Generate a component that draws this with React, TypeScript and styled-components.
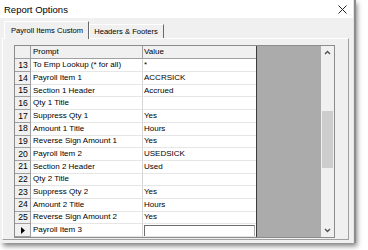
import React from 'react';
import styled, { createGlobalStyle } from 'styled-components';

type Row = { num?: string; prompt: string; value: string; current?: boolean };

const rows: Row[] = [
  { num: '13', prompt: 'To Emp Lookup (* for all)', value: '*' },
  { num: '14', prompt: 'Payroll Item 1', value: 'ACCRSICK' },
  { num: '15', prompt: 'Section 1 Header', value: 'Accrued' },
  { num: '16', prompt: 'Qty 1 Title', value: '' },
  { num: '17', prompt: 'Suppress Qty 1', value: 'Yes' },
  { num: '18', prompt: 'Amount 1 Title', value: 'Hours' },
  { num: '19', prompt: 'Reverse Sign Amount 1', value: 'Yes' },
  { num: '20', prompt: 'Payroll Item 2', value: 'USEDSICK' },
  { num: '21', prompt: 'Section 2 Header', value: 'Used' },
  { num: '22', prompt: 'Qty 2 Title', value: '' },
  { num: '23', prompt: 'Suppress Qty 2', value: 'Yes' },
  { num: '24', prompt: 'Amount 2 Title', value: 'Hours' },
  { num: '25', prompt: 'Reverse Sign Amount 2', value: 'Yes' },
  { prompt: 'Payroll Item 3', value: '', current: true },
];

export default function App() {
  return (
    <>
      <GlobalStyle />
      <Window>
        <TitleBar>
          <span>Report Options</span>
          <svg width="9" height="9" viewBox="0 0 9 9">
            <path d="M0.5 0.5 L8.5 8.5 M8.5 0.5 L0.5 8.5" stroke="#222" strokeWidth="1" />
          </svg>
        </TitleBar>

        <Body>
          <TabStrip>
            <Tab $active>Payroll Items Custom</Tab>
            <Tab>Headers &amp; Footers</Tab>
          </TabStrip>

          <Panel>
            <Grid>
              <Table>
                <GridRow $header>
                  <HeadCell />
                  <PromptCell $header>Prompt</PromptCell>
                  <ValueCell $header>Value</ValueCell>
                </GridRow>
                {rows.map((row, i) => (
                  <GridRow key={i}>
                    <HeadCell>
                      {row.current ? (
                        <svg width="4" height="7" viewBox="0 0 4 7">
                          <polygon points="0,0 4,3.5 0,7" fill="#000" />
                        </svg>
                      ) : (
                        row.num
                      )}
                    </HeadCell>
                    <PromptCell>{row.prompt}</PromptCell>
                    <ValueCell>{row.current ? <EditBox /> : row.value}</ValueCell>
                  </GridRow>
                ))}
              </Table>

              <Filler />

              <ScrollBar>
                <ArrowBox>
                  <svg width="7" height="5" viewBox="0 0 7 5">
                    <polyline points="1,4 3.5,1.5 6,4" fill="none" stroke="#505050" strokeWidth="1.4" />
                  </svg>
                </ArrowBox>
                <Track>
                  <Thumb />
                </Track>
                <ArrowBox>
                  <svg width="7" height="5" viewBox="0 0 7 5">
                    <polyline points="1,1 3.5,3.5 6,1" fill="none" stroke="#505050" strokeWidth="1.4" />
                  </svg>
                </ArrowBox>
              </ScrollBar>
            </Grid>
          </Panel>
        </Body>
      </Window>
    </>
  );
}

const GlobalStyle = createGlobalStyle`
  html, body {
    margin: 0;
    padding: 0;
    background: #fff;
  }

  body {
    width: 368px;
    height: 250px;
    overflow: hidden;
    font-family: 'Liberation Sans', Arial, sans-serif;
    color: #000;
  }
`;

const Window = styled.div`
  width: 353px;
  height: 243px;
  display: flex;
  flex-direction: column;
  background: #f0f0f0;
  border-right: 1px solid #e4e4e4;
  box-shadow: 2px 0 0 #8c8c8c, 3px 3px 5px rgba(0, 0, 0, 0.5);
`;

const TitleBar = styled.div`
  height: 20px;
  display: flex;
  align-items: center;
  justify-content: space-between;
  padding: 0 6px 0 4px;
  background: #fff;
  font-size: 9.5px;
`;

const Body = styled.div`
  flex: 1;
  display: flex;
  flex-direction: column;
  padding: 4px 4px 3px 2px;
`;

const TabStrip = styled.div`
  height: 16px;
  display: flex;
  align-items: flex-end;
  padding-left: 2px;
`;

const Tab = styled.div<{ $active?: boolean }>`
  position: relative;
  z-index: ${({ $active }) => ($active ? 1 : 0)};
  height: ${({ $active }) => ($active ? '17px' : '13px')};
  margin-bottom: ${({ $active }) => ($active ? '-1px' : '0')};
  display: flex;
  align-items: center;
  padding: 0 ${({ $active }) => ($active ? '5px' : '5px')} 0 ${({ $active }) => ($active ? '6px' : '4px')};
  background: #f0f0f0;
  border-top: 1px solid #fff;
  border-left: 1px solid #fff;
  border-right: 1px solid #696969;
  font-size: 7.6px;
  white-space: nowrap;
`;

const Panel = styled.div`
  flex: 1;
  display: flex;
  padding: 6px 13px 1px 11px;
  border: 1px solid;
  border-color: #fff #a0a0a0 #a0a0a0 #fff;
  min-height: 0;
`;

const Grid = styled.div`
  flex: 1;
  display: flex;
  border: 1px solid #8c8c8c;
  background: #ababab;
  overflow: hidden;
`;

const Table = styled.div`
  width: 241px;
  display: flex;
  flex-direction: column;
  background: #fff;
  border-right: 1px solid #3c3c3c;
  overflow: hidden;
`;

const GridRow = styled.div<{ $header?: boolean }>`
  flex: none;
  height: ${({ $header }) => ($header ? '13px' : '12.7px')};
  display: grid;
  grid-template-columns: 16px 112px 113px;
  font-size: 8px;
  line-height: 1;
`;

const HeadCell = styled.div`
  display: flex;
  align-items: center;
  justify-content: center;
  padding-left: 1px;
  background: #f0f0f0;
  border-right: 1px solid #a0a0a0;
  border-bottom: 1px solid #a0a0a0;
  font-size: 8.6px;
`;

const PromptCell = styled.div<{ $header?: boolean }>`
  display: flex;
  align-items: center;
  padding-left: 2px;
  background: ${({ $header }) => ($header ? '#f0f0f0' : '#fff')};
  border-right: 1px solid ${({ $header }) => ($header ? '#a0a0a0' : '#d4d4d4')};
  border-bottom: 1px solid ${({ $header }) => ($header ? '#a0a0a0' : '#e6e6e6')};
  white-space: nowrap;
  overflow: hidden;
`;

const ValueCell = styled(PromptCell)`
  border-right: none;
  padding-left: 1px;
`;

const EditBox = styled.div`
  align-self: stretch;
  flex: 1;
  margin: 1px 1px -2px 0;
  border: 1px solid #6e6e6e;
  border-right-color: #a8a8a8;
  background: #fff;
`;

const Filler = styled.div`
  flex: 1;
`;

const ScrollBar = styled.div`
  width: 13px;
  display: flex;
  flex-direction: column;
  background: #f0f0f0;
`;

const ArrowBox = styled.div`
  height: 13px;
  display: flex;
  align-items: center;
  justify-content: center;
`;

const Track = styled.div`
  flex: 1;
  padding: 52px 1px 0;
`;

const Thumb = styled.div`
  height: 57px;
  background: #cdcdcd;
`;
